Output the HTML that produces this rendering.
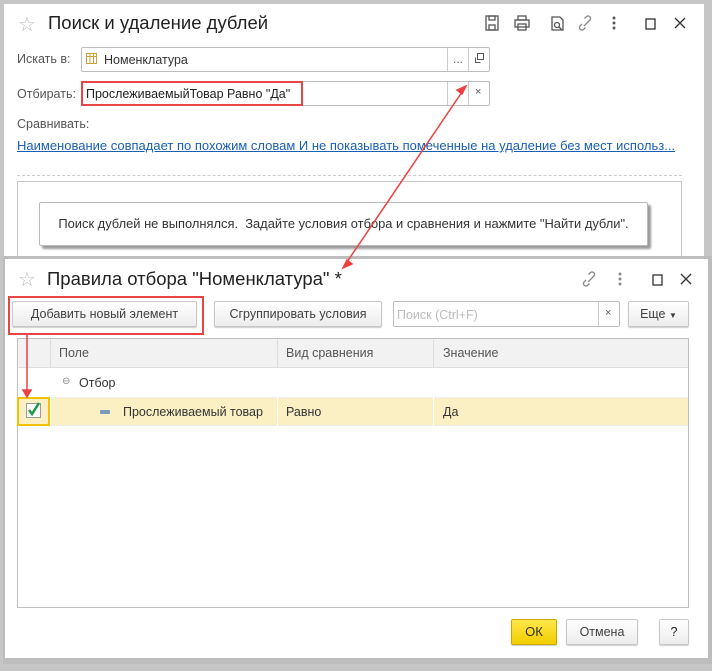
<!DOCTYPE html>
<html><head><meta charset="utf-8"><style>
*{box-sizing:border-box;margin:0;padding:0}
body{width:712px;height:671px;position:relative;overflow:hidden;background:#fff;font-family:"Liberation Sans",sans-serif;font-size:12px;color:#333}
.a{position:absolute}
.btn{position:absolute;border:1px solid #c8c8c8;border-radius:2px;background:linear-gradient(#fff,#ececec);box-shadow:0 1px 1px rgba(0,0,0,.2);text-align:center;color:#404040;font-size:12.5px}
.inp{position:absolute;border:1px solid #bdbdbd;border-radius:2px;background:#fff}
</style></head><body>
<div class="a" style="left:0;top:0;width:712px;height:671px;background:#c6c6c6"></div>
<div class="a" style="left:4px;top:4px;width:700px;height:660px;background:#fff"></div>
<div class="a" style="left:18px;top:12px;font-size:20px;color:#bbb">☆</div>
<div class="a" style="left:48px;top:12px;font-size:18.5px;color:#222">Поиск и удаление дублей</div>
<svg class="a" style="left:480px;top:14px" width="220" height="20" fill="none" stroke="#555" stroke-width="1.3">
<rect x="6" y="2" width="12" height="14"/><rect x="9" y="2" width="6" height="4"/><rect x="9" y="11" width="6" height="5"/>
<rect x="35" y="6" width="14" height="7"/><rect x="38" y="2" width="8" height="4"/><rect x="38" y="10" width="8" height="6"/>
<path d="M72 16V3h8l3 3v10z"/><circle cx="77" cy="11" r="2.5"/><path d="M79 13l3 3"/>
<path d="M104 12l6-6M102 10l-2 2a2.5 2.5 0 003.5 3.5l2-2M108 8l2-2a2.5 2.5 0 00-3.5-3.5l-2 2" stroke="#888"/>
<circle cx="134" cy="4" r=".8" fill="#666"/><circle cx="134" cy="9" r=".8" fill="#666"/><circle cx="134" cy="14" r=".8" fill="#666"/>
<rect x="166" y="5" width="9" height="10" stroke="#333"/>
<path d="M195 4l10 10M205 4l-10 10" stroke="#333"/>
</svg>
<div class="a" style="left:17px;top:52px;color:#555;font-size:12.5px">Искать в:</div>
<div class="inp" style="left:81px;top:47px;width:409px;height:25px"></div>
<svg class="a" style="left:86px;top:53px" width="12" height="12"><rect x=".5" y=".5" width="10" height="10" fill="#fff" stroke="#c9a33a"/><path d="M.5 3.5h10M4 .5v10M7.5.5v10" stroke="#c9a33a"/></svg>
<div class="a" style="left:104px;top:53px;font-size:12.5px">Номенклатура</div>
<div class="a" style="left:447px;top:48px;width:1px;height:23px;background:#ccc"></div>
<div class="a" style="left:468px;top:48px;width:1px;height:23px;background:#ccc"></div>
<div class="a" style="left:453px;top:52px;color:#555">...</div>
<svg class="a" style="left:474px;top:53px" width="12" height="12" fill="none" stroke="#555"><rect x="3.5" y=".5" width="6" height="6"/><path d="M1.5 4.5v5h5"/></svg>
<div class="a" style="left:17px;top:87px;color:#555;font-size:12.5px">Отбирать:</div>
<div class="inp" style="left:81px;top:81px;width:409px;height:25px"></div>
<div class="a" style="left:81px;top:81px;width:222px;height:25px;border:2px solid #e84545"></div>
<div class="a" style="left:86px;top:87px;font-size:12.5px;color:#222">ПрослеживаемыйТовар Равно "Да"</div>
<div class="a" style="left:447px;top:82px;width:1px;height:23px;background:#ccc"></div>
<div class="a" style="left:468px;top:82px;width:1px;height:23px;background:#ccc"></div>
<div class="a" style="left:475px;top:86px;color:#555;font-size:11px">×</div>
<div class="a" style="left:17px;top:117px;color:#555;font-size:12.5px">Сравнивать:</div>
<div class="a" style="left:17px;top:138px;color:#1a5fb4;font-size:13px;text-decoration:underline;white-space:nowrap">Наименование совпадает по похожим словам И не показывать помеченные на удаление без мест использ...</div>
<div class="a" style="left:17px;top:175px;width:665px;border-top:1px dashed #ccc"></div>
<div class="a" style="left:17px;top:181px;width:665px;height:80px;border:1px solid #c8c8c8"></div>
<div class="a" style="left:39px;top:202px;width:609px;height:44px;border:1px solid #bbb;border-radius:2px;background:#fff;box-shadow:3px 3px 2px #999;font-size:12.9px;line-height:42px;text-align:center;color:#333;white-space:nowrap">Поиск дублей не выполнялся.&nbsp; Задайте условия отбора и сравнения и нажмите "Найти дубли".</div>

<div class="a" style="left:3px;top:256px;width:709px;height:408px;background:#bdbdbd"></div>
<div class="a" style="left:5px;top:259px;width:703px;height:399px;background:#fff"></div>
<div class="a" style="left:18px;top:267px;font-size:20px;color:#bbb">☆</div>
<div class="a" style="left:47px;top:268px;font-size:18.5px;color:#222">Правила отбора "Номенклатура" *</div>
<svg class="a" style="left:580px;top:270px" width="120" height="20" fill="none" stroke="#888" stroke-width="1.3">
<path d="M8 12l6-6M6 10l-2 2a2.5 2.5 0 003.5 3.5l2-2M12 8l2-2a2.5 2.5 0 00-3.5-3.5l-2 2"/>
<circle cx="40" cy="4" r=".8" fill="#666"/><circle cx="40" cy="9" r=".8" fill="#666"/><circle cx="40" cy="14" r=".8" fill="#666"/>
<rect x="73" y="5" width="9" height="10" stroke="#333"/>
<path d="M101 4l10 10M111 4l-10 10" stroke="#333"/>
</svg>
<div class="btn" style="left:12px;top:301px;width:185px;height:26px;line-height:24px">Добавить новый элемент</div>
<div class="a" style="left:8px;top:296px;width:196px;height:39px;border:2px solid #e84545"></div>
<div class="btn" style="left:214px;top:301px;width:168px;height:26px;line-height:24px">Сгруппировать условия</div>
<div class="inp" style="left:393px;top:301px;width:227px;height:26px"></div>
<div class="a" style="left:397px;top:308px;color:#bbb;font-size:12.5px">Поиск (Ctrl+F)</div>
<div class="a" style="left:598px;top:302px;width:1px;height:24px;background:#ccc"></div>
<div class="a" style="left:605px;top:307px;color:#555;font-size:11px">×</div>
<div class="btn" style="left:628px;top:301px;width:61px;height:26px;line-height:24px">Еще <span style="font-size:8px">▼</span></div>
<div class="a" style="left:17px;top:338px;width:672px;height:270px;border:1px solid #c0c0c0"></div>
<div class="a" style="left:18px;top:339px;width:670px;height:29px;background:#f2f2f2;border-bottom:1px solid #ddd"></div>
<div class="a" style="left:50px;top:339px;width:1px;height:29px;background:#ddd"></div>
<div class="a" style="left:277px;top:339px;width:1px;height:29px;background:#ddd"></div>
<div class="a" style="left:433px;top:339px;width:1px;height:29px;background:#ddd"></div>
<div class="a" style="left:59px;top:346px;color:#555;font-size:12.5px">Поле</div>
<div class="a" style="left:286px;top:346px;color:#555;font-size:12.5px">Вид сравнения</div>
<div class="a" style="left:443px;top:346px;color:#555;font-size:12.5px">Значение</div>
<div class="a" style="left:62px;top:376px;color:#888;font-size:10px">⊖</div>
<div class="a" style="left:79px;top:376px;font-size:12.5px">Отбор</div>
<div class="a" style="left:18px;top:397px;width:670px;height:29px;background:#fbf0c4;border-top:1px solid #eee;border-bottom:1px solid #eee"></div>
<div class="a" style="left:50px;top:397px;width:1px;height:29px;background:#fff"></div>
<div class="a" style="left:277px;top:397px;width:1px;height:29px;background:#fff"></div>
<div class="a" style="left:433px;top:397px;width:1px;height:29px;background:#fff"></div>
<div class="a" style="left:17px;top:397px;width:33px;height:29px;border:2px solid #f2c200"></div>
<div class="a" style="left:26px;top:403px;width:15px;height:15px;border:1px solid #999;background:#fff"></div>
<svg class="a" style="left:26px;top:400px" width="16" height="18"><path d="M3 10l3 4 7-11" fill="none" stroke="#1e9a45" stroke-width="2.5"/></svg>
<div class="a" style="left:100px;top:410px;width:10px;height:4px;background:#7a9ab8;border-radius:1px"></div>
<div class="a" style="left:123px;top:405px;font-size:12.5px">Прослеживаемый товар</div>
<div class="a" style="left:286px;top:405px;font-size:12.5px">Равно</div>
<div class="a" style="left:443px;top:405px;font-size:12.5px">Да</div>
<div class="btn" style="left:511px;top:619px;width:46px;height:26px;line-height:24px;background:linear-gradient(#ffe84a,#f2cd00);border-color:#c9a800;color:#333;font-size:13px">ОК</div>
<div class="btn" style="left:566px;top:619px;width:72px;height:26px;line-height:24px">Отмена</div>
<div class="btn" style="left:659px;top:619px;width:30px;height:26px;line-height:24px;color:#222">?</div>
<svg class="a" style="left:0;top:0" width="712" height="671">
<g stroke="#ee4040" stroke-width="1.5" fill="#ee4040">
<line x1="462" y1="92" x2="347" y2="262"/>
<path d="M466 86l-9 4 5 4z"/>
<path d="M343 268l9-4-5-4z"/>
<line x1="27" y1="335" x2="27" y2="391"/>
<path d="M23 390h8l-4 7z"/>
</g></svg>
</body></html>
